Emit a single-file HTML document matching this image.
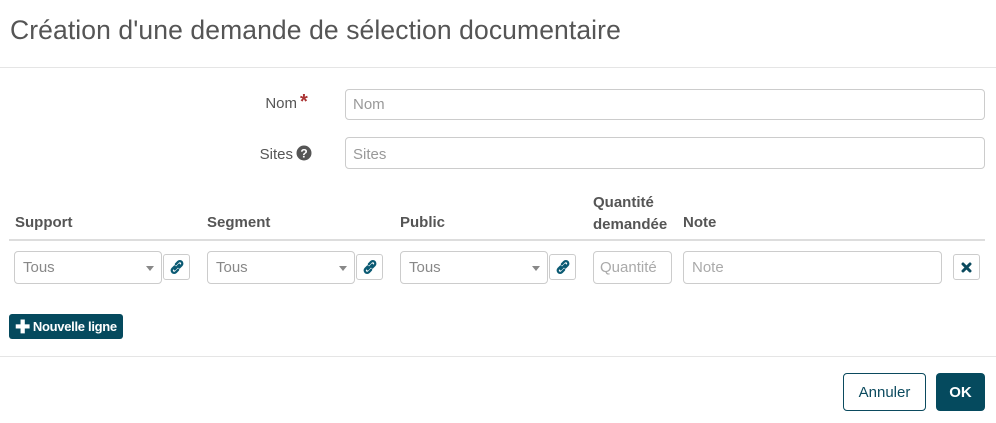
<!DOCTYPE html>
<html><head><meta charset="utf-8"><style>
*{box-sizing:border-box}
body{margin:0;width:996px;height:423px;background:#fff;font-family:"Liberation Sans",sans-serif;position:relative;overflow:hidden;color:#555}
.a{position:absolute}
.title{left:10px;top:15px;font-size:26.5px;color:#555;letter-spacing:0.1px}
.hr{left:0;width:996px;height:1px;background:#e5e5e5}
.lbl{font-size:15px;color:#555;text-align:right}
.inp{border:1px solid #ccc;border-radius:4px;height:31px;font-size:15px;color:#999;padding:6px 7px}
.th{font-size:15px;font-weight:bold;color:#555}
.sel{border:1px solid #ccc;border-radius:4px;height:33px;font-size:15px;color:#888;padding:7px 8px}
.dd:after{content:"";position:absolute;right:7px;top:14px;border-left:4px solid transparent;border-right:4px solid transparent;border-top:5px solid #888}
.lk{width:27px;height:26px;border:1px solid #ccc;border-radius:3px;display:flex;align-items:center;justify-content:center}
.btn{border-radius:4px;font-size:15px;display:flex;align-items:center;justify-content:center}
</style></head><body>
<div class="a title">Création d'une demande de sélection documentaire</div>
<div class="a hr" style="top:67px"></div>
<div class="a lbl" style="left:200px;width:97px;top:95px">Nom</div>
<div class="a" style="left:300px;top:91px;color:#a33;font-size:20px;font-weight:bold">*</div>
<div class="a inp" style="left:345px;top:89px;width:640px">Nom</div>
<div class="a lbl" style="left:200px;width:93px;top:146px">Sites</div>
<svg class="a" style="left:296px;top:145px" width="16" height="16" viewBox="0 0 16 16"><circle cx="8" cy="8" r="7.5" fill="#555"/><text x="8" y="12.5" font-size="12" font-weight="bold" text-anchor="middle" fill="#fff" font-family="Liberation Sans">?</text></svg>
<div class="a inp" style="left:345px;top:137px;width:640px;height:32px;padding-top:8px">Sites</div>
<div class="a th" style="left:15px;top:214px">Support</div>
<div class="a th" style="left:207px;top:214px">Segment</div>
<div class="a th" style="left:400px;top:214px">Public</div>
<div class="a th" style="left:593px;top:192px;line-height:22px">Quantité<br>demandée</div>
<div class="a th" style="left:683px;top:214px">Note</div>
<div class="a" style="left:9px;top:239px;width:976px;height:2px;background:#ddd"></div>

<div class="a sel dd" style="left:14px;top:251px;width:148px">Tous</div>
<div class="a lk" style="left:163px;top:254px"><svg width="16" height="16" viewBox="0 0 14 14" fill="none" stroke="#0b5a73" stroke-width="2" stroke-linecap="round"><path d="M6 4.5l2-2a2 2 0 0 1 3 3l-2 2M8 9.5l-2 2a2 2 0 0 1-3-3l2-2M5 9l4-4"/></svg></div>
<div class="a sel dd" style="left:207px;top:251px;width:148px">Tous</div>
<div class="a lk" style="left:356px;top:254px"><svg width="16" height="16" viewBox="0 0 14 14" fill="none" stroke="#0b5a73" stroke-width="2" stroke-linecap="round"><path d="M6 4.5l2-2a2 2 0 0 1 3 3l-2 2M8 9.5l-2 2a2 2 0 0 1-3-3l2-2M5 9l4-4"/></svg></div>
<div class="a sel dd" style="left:400px;top:251px;width:148px">Tous</div>
<div class="a lk" style="left:549px;top:254px"><svg width="16" height="16" viewBox="0 0 14 14" fill="none" stroke="#0b5a73" stroke-width="2" stroke-linecap="round"><path d="M6 4.5l2-2a2 2 0 0 1 3 3l-2 2M8 9.5l-2 2a2 2 0 0 1-3-3l2-2M5 9l4-4"/></svg></div>
<div class="a sel" style="left:593px;top:251px;width:79px;overflow:hidden;white-space:nowrap;padding-left:6px;color:#aaa">Quantité</div>
<div class="a sel" style="left:683px;top:251px;width:259px;color:#aaa">Note</div>
<div class="a lk" style="left:953px;top:254px"><svg width="11" height="11" viewBox="0 0 11 11" stroke="#0b4a5e" stroke-width="3" stroke-linecap="round"><path d="M2 2l7 7M9 2l-7 7"/></svg></div>

<div class="a btn" style="left:9px;top:314px;width:114px;height:25px;background:#054a5e;color:#fff;font-size:13px;font-weight:bold;letter-spacing:-0.3px;border-radius:3px"><span style="font-size:18px;margin-right:3px;line-height:1">✚</span>Nouvelle ligne</div>
<div class="a hr" style="top:356px"></div>
<div class="a btn" style="left:843px;top:373px;width:83px;height:38px;border:1px solid #0b4a5e;color:#0b4a5e">Annuler</div>
<div class="a btn" style="left:936px;top:373px;width:49px;height:38px;background:#054a5e;color:#fff;font-weight:bold">OK</div>
</body></html>
